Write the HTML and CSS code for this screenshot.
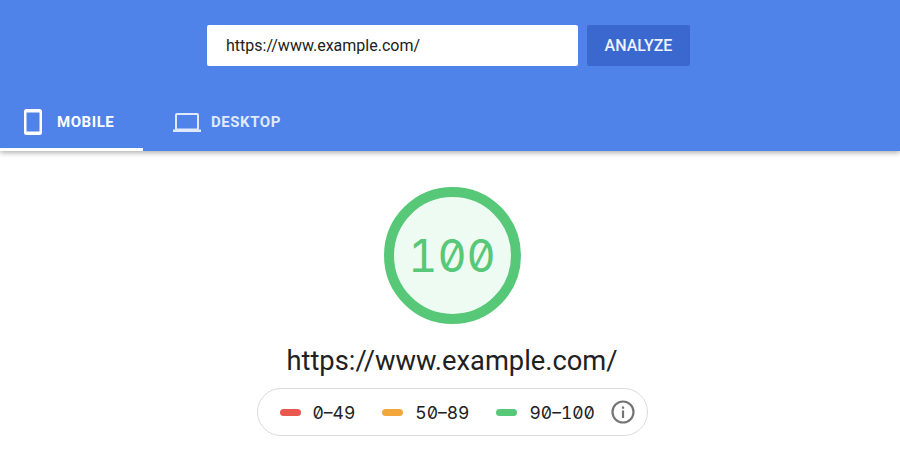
FILE: index.html
```html
<!DOCTYPE html>
<html lang="en">
<head>
  <meta charset="UTF-8" />
  <title>PageSpeed Insights</title>
  <link rel="stylesheet" href="styles.css">
</head>
<body>
  <header class="header">
    <div class="search-row">
      <div class="url-input">https://www.example.com/</div>
      <div class="analyze-btn">ANALYZE</div>
    </div>
    <div class="tabs">
      <div class="tab tab-active">
        <svg class="tab-icon" width="18" height="26" viewBox="0 0 18 26">
          <path fill="#fff" fill-rule="evenodd" d="M2.500 0h13A2.500 2.500 0 0 1 18 2.500v21a2.500 2.500 0 0 1-2.500 2.500h-13A2.500 2.500 0 0 1 0 23.500v-21A2.500 2.500 0 0 1 2.500 0zM2.500 3.500v19h13v-19z"/>
        </svg>
        <span>MOBILE</span>
      </div>
      <div class="tab">
        <svg class="tab-icon" width="28" height="19" viewBox="0 0 28 19">
          <path fill="#dfe9fb" fill-rule="evenodd" d="M4 0h20a2 2 0 0 1 2 2v13.500a2 2 0 0 1-.3 1H28V19H0v-2.500h2.300a2 2 0 0 1-.3-1V2a2 2 0 0 1 2-2zM4 2v13.500h20V2z"/>
        </svg>
        <span>DESKTOP</span>
      </div>
    </div>
  </header>

  <main class="report">
    <div class="gauge"><span class="gauge-score">100</span></div>
    <div class="report-url">https://www.example.com/</div>
    <div class="legend">
      <div class="legend-item"><span class="pill pill-red"></span>0–49</div>
      <div class="legend-item"><span class="pill pill-orange"></span>50–89</div>
      <div class="legend-item"><span class="pill pill-green"></span>90–100</div>
      <svg class="info-icon" width="24" height="24" viewBox="0 0 24 24">
        <circle cx="12" cy="12" r="10.500" fill="none" stroke="#757575" stroke-width="2.200"/>
        <rect x="10.900" y="10.500" width="2.200" height="7.500" fill="#757575"/>
        <rect x="10.900" y="6.500" width="2.200" height="2.200" fill="#757575"/>
      </svg>
    </div>
  </main>
</body>
</html>
```

FILE: styles.css
```css
body {
  margin: 0;
  background: #fff;
  font-family: "Roboto", "Liberation Sans", sans-serif;
  overflow: hidden;
}

.header {
  background: #4f83ea;
  height: 151px;
  box-shadow: 0 2px 5px rgba(0,0,0,0.3);
  padding-top: 25px;
  box-sizing: border-box;
  display: flex;
  flex-direction: column;
  justify-content: space-between;
}

.search-row {
  display: flex;
  justify-content: center;
  gap: 9px;
  padding-right: 3px;
}

.url-input {
  width: 371px;
  height: 41px;
  box-sizing: border-box;
  background: #fff;
  border-radius: 2px;
  padding-left: 19px;
  font-size: 16px;
  line-height: 41px;
  color: #212121;
}

.analyze-btn {
  width: 103px;
  height: 41px;
  background: #3b68cf;
  border-radius: 2px;
  color: #eef3fd;
  font-size: 16px;
  font-weight: 500;
  line-height: 41px;
  text-align: center;
}

.tabs {
  display: flex;
  height: 58px;
}

.tab {
  display: flex;
  align-items: center;
  gap: 15px;
  width: 143px;
  box-sizing: border-box;
  padding-left: 29px;
  font-size: 15px;
  font-weight: 700;
  color: #dfe9fb;
  letter-spacing: 0.55px;
}

.tab + .tab {
  width: auto;
  gap: 10px;
  padding-left: 30px;
}

.tab-active {
  color: #fff;
  box-shadow: inset 0 -3px 0 #fff;
  padding-left: 24px;
}

.report {
  display: flex;
  flex-direction: column;
  align-items: center;
  padding-left: 4px;
}

.gauge {
  width: 137px;
  height: 137px;
  box-sizing: border-box;
  margin-top: 36px;
  border: 10px solid #57c878;
  border-radius: 50%;
  background: #eefbf2;
  display: flex;
  align-items: center;
  justify-content: center;
}

.gauge-score {
  font-family: "Inter", "DejaVu Sans Mono", monospace;
  font-feature-settings: "zero", "tnum";
  font-size: 45px;
  font-weight: 400;
  color: #57c878;
}

.report-url {
  margin-top: 19px;
  font-size: 27.3px;
  line-height: 36px;
  color: #212121;
}

.legend {
  margin-top: 9px;
  width: 391px;
  height: 48px;
  box-sizing: border-box;
  border: 1px solid #dcdcdc;
  border-radius: 24px;
  display: flex;
  align-items: center;
  padding-left: 22px;
  font-family: "Inter", "DejaVu Sans Mono", monospace;
  font-feature-settings: "zero", "tnum";
  font-size: 17.5px;
  color: #212121;
}

.legend-item {
  display: flex;
  align-items: center;
  gap: 12px;
  margin-right: 27px;
}

.legend-item:nth-child(3) {
  margin-right: 16px;
}

.pill {
  width: 21px;
  height: 7px;
  border-radius: 4px;
}

.pill-red { background: #e9584f; }
.pill-orange { background: #f2a63c; }
.pill-green { background: #57c878; }
```
